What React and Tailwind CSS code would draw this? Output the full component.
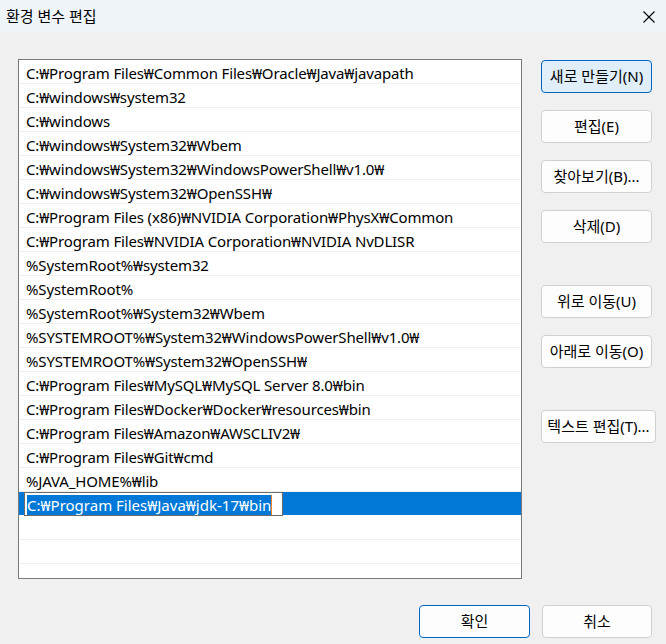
import React from "react";

const paths = [
  "C:₩Program Files₩Common Files₩Oracle₩Java₩javapath",
  "C:₩windows₩system32",
  "C:₩windows",
  "C:₩windows₩System32₩Wbem",
  "C:₩windows₩System32₩WindowsPowerShell₩v1.0₩",
  "C:₩windows₩System32₩OpenSSH₩",
  "C:₩Program Files (x86)₩NVIDIA Corporation₩PhysX₩Common",
  "C:₩Program Files₩NVIDIA Corporation₩NVIDIA NvDLISR",
  "%SystemRoot%₩system32",
  "%SystemRoot%",
  "%SystemRoot%₩System32₩Wbem",
  "%SYSTEMROOT%₩System32₩WindowsPowerShell₩v1.0₩",
  "%SYSTEMROOT%₩System32₩OpenSSH₩",
  "C:₩Program Files₩MySQL₩MySQL Server 8.0₩bin",
  "C:₩Program Files₩Docker₩Docker₩resources₩bin",
  "C:₩Program Files₩Amazon₩AWSCLIV2₩",
  "C:₩Program Files₩Git₩cmd",
  "%JAVA_HOME%₩lib",
];

const editing = "C:₩Program Files₩Java₩jdk-17₩bin";

function SideButton({ label, primary, wide, className = "" }) {
  return (
    <button
      className={
        "h-[33px] rounded-[4px] border text-[15px] text-black flex items-center justify-center " +
        (wide ? "w-[115px] " : "w-[111px] ") +
        (primary
          ? "border-[#0067c0] bg-[#e0eef9] "
          : "border-[#d0d0d0] bg-[#fdfdfd] ") +
        className
      }
    >
      {label}
    </button>
  );
}

export default function App() {
  return (
    <div className="w-[666px] h-[644px] bg-[#f0f0f0] flex flex-col font-['Noto_Sans','Noto_Sans_CJK_KR',sans-serif] text-black overflow-hidden">
      {/* title bar */}
      <div className="h-[33px] bg-[#eff4f9] flex items-center justify-between pl-[6px] pr-[11px]">
        <span className="text-[15px]">환경 변수 편집</span>
        <svg width="12" height="12" viewBox="0 0 12 12" className="mt-[1px]">
          <path d="M0.5 0.5 L11.5 11.5 M11.5 0.5 L0.5 11.5" stroke="#000" strokeWidth="1.1" />
        </svg>
      </div>

      <div className="flex pt-[26px] pl-[18px]">
        {/* list */}
        <div className="w-[504px] h-[520px] border border-[#7a7a7a] bg-white overflow-hidden">
          {paths.map((p) => (
            <div
              key={p}
              className="h-[24px] border-b border-[#f0f0f0] pl-[7px] pt-[3px] flex items-center text-[15px] tracking-[-0.15px] whitespace-nowrap"
            >
              {p}
            </div>
          ))}
          <div className="h-[24px] bg-[#0078d7] border-b border-white flex">
            <div className="ml-[5px] w-[259px] h-[24px] border border-[#6b6b6b] bg-white flex items-center pl-[2px] pt-[1px]">
              <span className="bg-[#0078d7] text-white text-[15px] leading-[20px] whitespace-nowrap">
                {editing}
              </span>
              <span className="w-[1px] h-[20px] bg-[#f08020]" />
            </div>
          </div>
          {[0, 1, 2].map((i) => (
            <div key={i} className="h-[24px] border-b border-[#f0f0f0]" />
          ))}
        </div>

        {/* side buttons */}
        <div className="ml-[19px] mt-[1px] flex flex-col">
          <SideButton label="새로 만들기(N)" primary />
          <SideButton label="편집(E)" className="mt-[17px]" />
          <SideButton label="찾아보기(B)..." className="mt-[17px]" />
          <SideButton label="삭제(D)" className="mt-[17px]" />
          <SideButton label="위로 이동(U)" className="mt-[42px]" />
          <SideButton label="아래로 이동(O)" className="mt-[17px]" />
          <SideButton label="텍스트 편집(T)..." wide className="mt-[42px]" />
        </div>
      </div>

      {/* bottom buttons */}
      <div className="flex justify-end gap-[12px] pr-[14px] mt-[26px]">
        <button className="w-[111px] h-[33px] rounded-[4px] border border-[#0067c0] bg-[#fdfdfd] text-[15px]">
          확인
        </button>
        <button className="w-[110px] h-[33px] rounded-[4px] border border-[#d0d0d0] bg-[#fdfdfd] text-[15px]">
          취소
        </button>
      </div>
    </div>
  );
}
